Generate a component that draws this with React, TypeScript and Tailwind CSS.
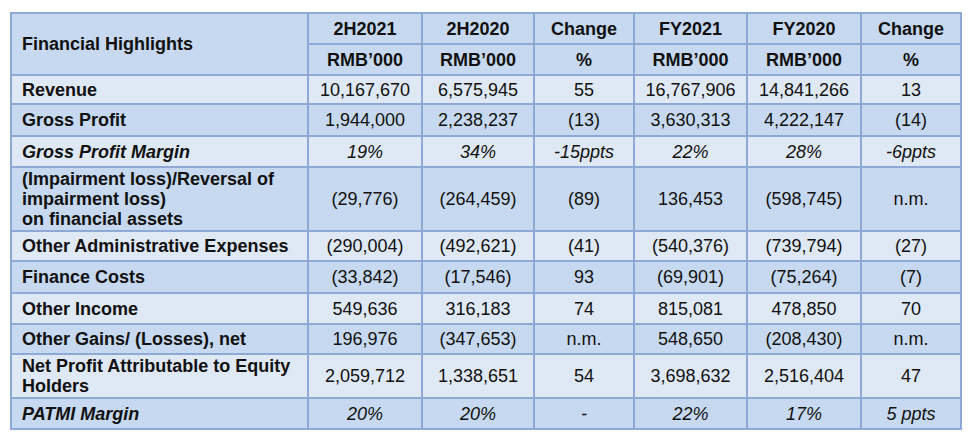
import React from 'react';

type Row = {
  label: React.ReactNode;
  values: string[];
  h: string;
  dark: boolean;
  italic?: boolean;
};

const rows: Row[] = [
  { label: 'Revenue', values: ['10,167,670', '6,575,945', '55', '16,767,906', '14,841,266', '13'], h: 'h-[29px]', dark: false },
  { label: 'Gross Profit', values: ['1,944,000', '2,238,237', '(13)', '3,630,313', '4,222,147', '(14)'], h: 'h-[32px]', dark: true },
  { label: 'Gross Profit Margin', values: ['19%', '34%', '-15ppts', '22%', '28%', '-6ppts'], h: 'h-[31px]', dark: false, italic: true },
  {
    label: (
      <>
        (Impairment loss)/Reversal of
        <br />
        impairment loss)
        <br />
        on financial assets
      </>
    ),
    values: ['(29,776)', '(264,459)', '(89)', '136,453', '(598,745)', 'n.m.'],
    h: 'h-[64px]',
    dark: true,
  },
  { label: 'Other Administrative Expenses', values: ['(290,004)', '(492,621)', '(41)', '(540,376)', '(739,794)', '(27)'], h: 'h-[30px]', dark: false },
  { label: 'Finance Costs', values: ['(33,842)', '(17,546)', '93', '(69,901)', '(75,264)', '(7)'], h: 'h-[32px]', dark: true },
  { label: 'Other Income', values: ['549,636', '316,183', '74', '815,081', '478,850', '70'], h: 'h-[31px]', dark: false },
  { label: 'Other Gains/ (Losses), net', values: ['196,976', '(347,653)', 'n.m.', '548,650', '(208,430)', 'n.m.'], h: 'h-[30px]', dark: true },
  {
    label: (
      <>
        Net Profit Attributable to Equity
        <br />
        Holders
      </>
    ),
    values: ['2,059,712', '1,338,651', '54', '3,698,632', '2,516,404', '47'],
    h: 'h-[44px]',
    dark: false,
  },
  { label: 'PATMI Margin', values: ['20%', '20%', '-', '22%', '17%', '5 ppts'], h: 'h-[31px]', dark: true, italic: true },
];

const cell = 'border-2 border-[#8ea9d6] p-0';

export default function App() {
  return (
    <div className="h-[441px] w-[970px] bg-white pl-[10px] pt-[12px] font-['Liberation_Sans',Arial,sans-serif] text-[18px] leading-[22px] text-[#111]">
      <table className="w-[950px] table-fixed border-collapse">
        <colgroup>
          <col className="w-[297px]" />
          <col className="w-[114px]" />
          <col className="w-[112px]" />
          <col className="w-[100px]" />
          <col className="w-[113px]" />
          <col className="w-[114px]" />
          <col className="w-[100px]" />
        </colgroup>
        <thead>
          <tr className="h-[31px] bg-[#c6d9f0] font-bold">
            <th rowSpan={2} className={`${cell} pl-[10px] text-left align-middle`}>
              Financial Highlights
            </th>
            <th className={`${cell} text-center`}>2H2021</th>
            <th className={`${cell} text-center`}>2H2020</th>
            <th className={`${cell} text-center`}>Change</th>
            <th className={`${cell} text-center`}>FY2021</th>
            <th className={`${cell} text-center`}>FY2020</th>
            <th className={`${cell} text-center`}>Change</th>
          </tr>
          <tr className="h-[31px] bg-[#c6d9f0] font-bold">
            <th className={`${cell} text-center`}>RMB’000</th>
            <th className={`${cell} text-center`}>RMB’000</th>
            <th className={`${cell} text-center`}>%</th>
            <th className={`${cell} text-center`}>RMB’000</th>
            <th className={`${cell} text-center`}>RMB’000</th>
            <th className={`${cell} text-center`}>%</th>
          </tr>
        </thead>
        <tbody>
          {rows.map((row, i) => (
            <tr key={i} className={`${row.h} ${row.dark ? 'bg-[#c6d9f0]' : 'bg-[#dfe8f5]'} ${row.italic ? 'italic' : ''}`}>
              <td className={`${cell} pl-[10px] text-left align-middle font-bold leading-[20px]`}>{row.label}</td>
              {row.values.map((v, j) => (
                <td key={j} className={`${cell} text-center align-middle`}>
                  {v}
                </td>
              ))}
            </tr>
          ))}
        </tbody>
      </table>
    </div>
  );
}
